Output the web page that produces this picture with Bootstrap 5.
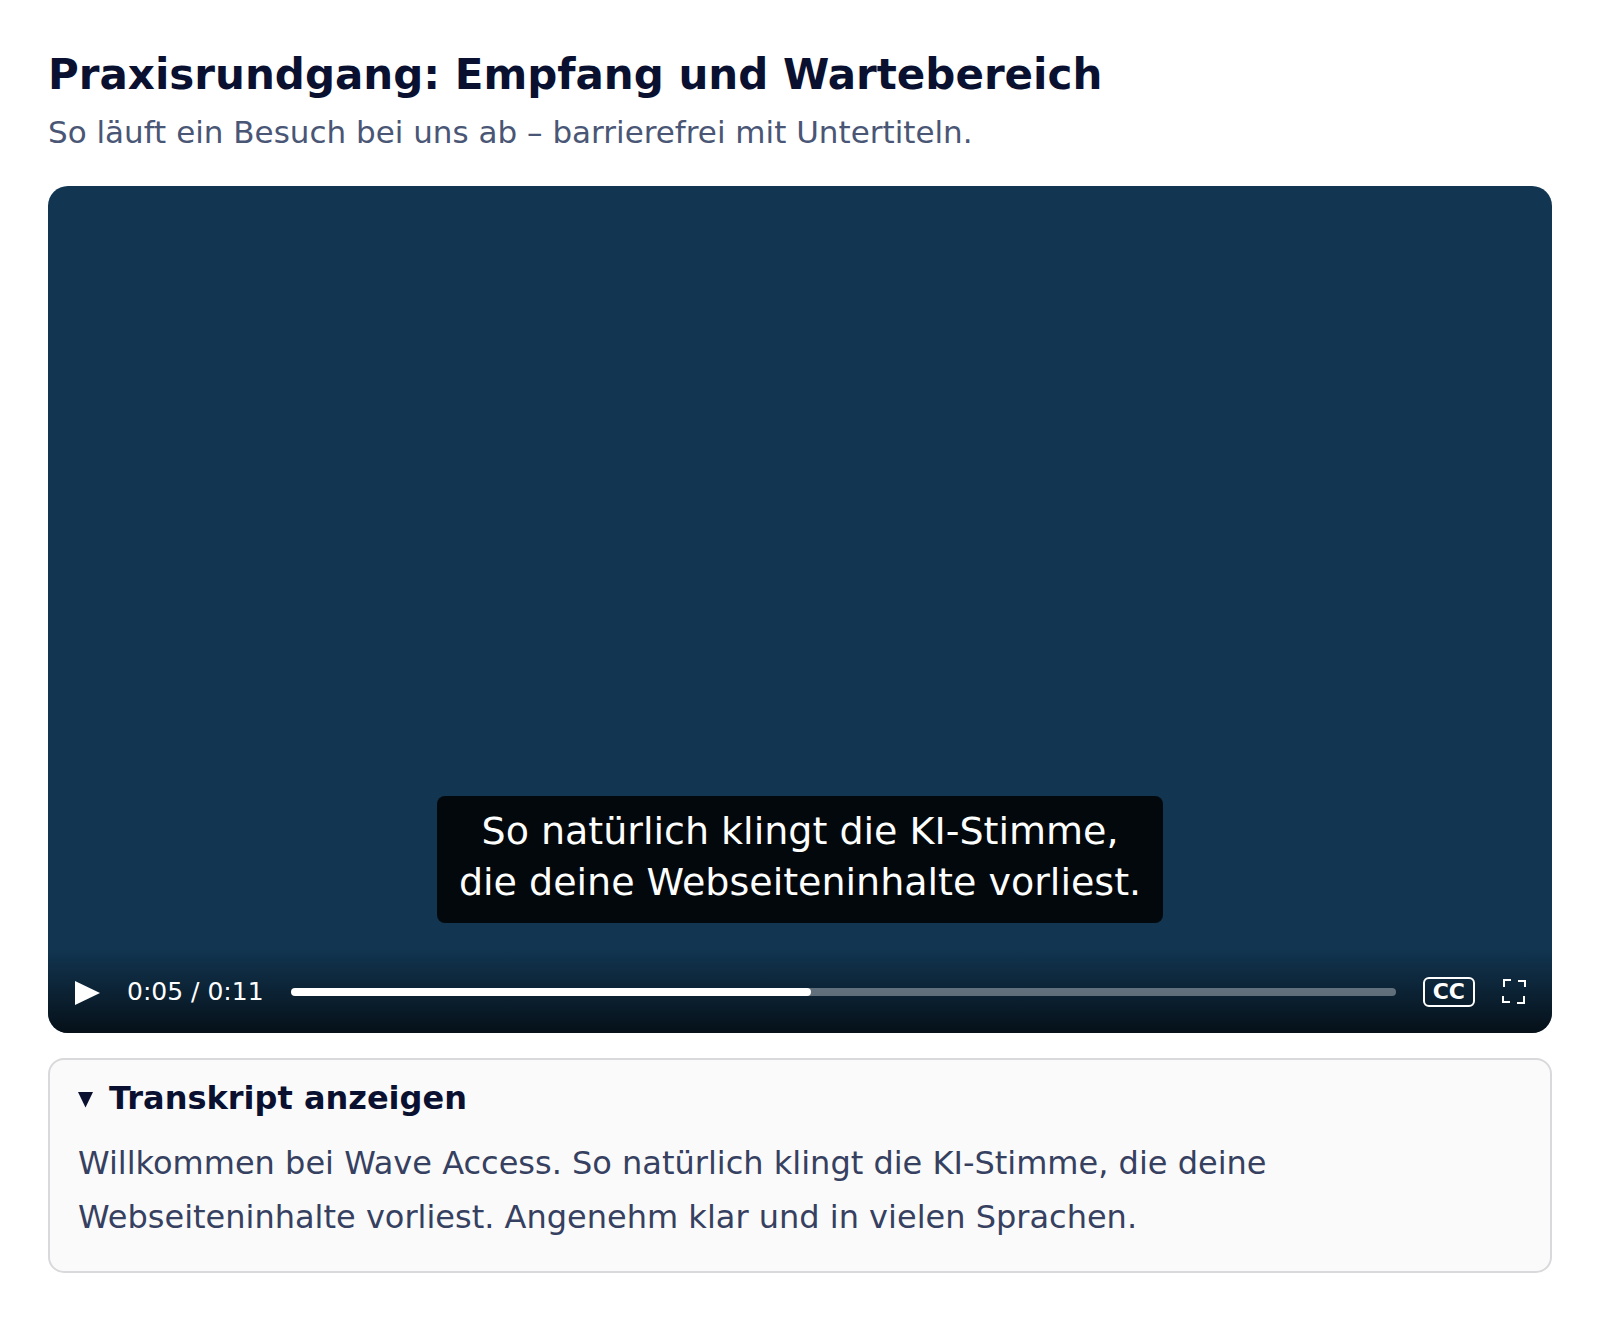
<!DOCTYPE html>
<html lang="de">
<head>
<meta charset="utf-8">
<meta name="viewport" content="width=device-width, initial-scale=1">
<title>Praxisrundgang</title>
<link rel="stylesheet" href="https://cdn.jsdelivr.net/npm/bootstrap@5.3.0/dist/css/bootstrap.min.css">
<style>
body { font-family: "DejaVu Sans", sans-serif; background: #fff; color: #0a1030; }
.page { padding: 48px; }
.tour-title { font-size: 42px; line-height: 53px; font-weight: 700; margin-bottom: 11px; }
.tour-sub { font-size: 31px; line-height: 40px; color: #4a5675; margin-bottom: 34px; }
.player { aspect-ratio: 71 / 40; background: #123652; border-radius: 20px; }
.caption-box { padding: 10px 22px 15px; margin-bottom: 24px; border-radius: 8px; background: rgba(0, 0, 0, .85); color: #fff; font-size: 38px; line-height: 51px; }
.controls { height: 86px; padding: 3px 26px 0; gap: 27px; background: linear-gradient(transparent, rgba(0, 0, 0, .7)); color: #fff; }
.ctl { background: none; border: 0; padding: 0; color: #fff; display: flex; }
.time { font-size: 25px; line-height: 30px; }
.cc { border: 2px solid #fff; border-radius: 6px; padding: 0 8px; font-size: 22px; line-height: 26px; font-weight: 700; }
.seek { appearance: none; height: 8px; min-width: 0; margin: 0; border-radius: 4px; background: linear-gradient(to right, #fff 46.7%, rgba(255, 255, 255, .35) 46.7%); }
.seek::-webkit-slider-thumb { appearance: none; width: 8px; height: 8px; border-radius: 4px; background: #fff; }
.transcript { margin-top: 25px; padding: 18px 28px 27px; border: 2px solid #d9d9dc; border-radius: 16px; background: #fafafa; }
.transcript summary { display: flex; align-items: center; gap: 16px; font-size: 32px; line-height: 40px; font-weight: 700; }
.transcript p { font-size: 32px; line-height: 54px; color: #364060; margin: 18px 0 0; }
</style>
</head>
<body>
<main class="container-fluid page">
  <h1 class="tour-title">Praxisrundgang: Empfang und Wartebereich</h1>
  <p class="tour-sub">So läuft ein Besuch bei uns ab – barrierefrei mit Untertiteln.</p>

  <section class="player d-flex flex-column justify-content-end overflow-hidden" aria-label="Videoplayer">
    <div class="caption-box align-self-center text-center">So natürlich klingt die KI-Stimme,<br>die deine Webseiteninhalte vorliest.</div>
    <div class="controls d-flex align-items-center">
      <button class="ctl" type="button" aria-label="Abspielen">
        <svg width="26" height="26" viewBox="0 0 26 26" fill="currentColor" aria-hidden="true"><path d="M1 2v24l25-12z"/></svg>
      </button>
      <span class="time text-nowrap">0:05 / 0:11</span>
      <input class="seek flex-grow-1" type="range" min="0" max="100" step="0.1" value="46.7" aria-label="Position">
      <button class="ctl cc" type="button" aria-label="Untertitel">CC</button>
      <button class="ctl" type="button" aria-label="Vollbild">
        <svg width="24" height="26" viewBox="0 0 24 26" fill="none" stroke="currentColor" stroke-width="2" aria-hidden="true"><path d="M2 8V1h7M16 2h7v6M1 17v6h7M15 24h7v-7"/></svg>
      </button>
    </div>
  </section>

  <details class="transcript" open>
    <summary><svg width="15" height="20" viewBox="0 0 15 20" fill="currentColor" aria-hidden="true"><path d="M0 4h15L7.500 19.500z"/></svg>Transkript anzeigen</summary>
    <p>Willkommen bei Wave Access. So natürlich klingt die KI-Stimme, die deine Webseiteninhalte vorliest. Angenehm klar und in vielen Sprachen.</p>
  </details>
</main>
<script src="https://cdn.jsdelivr.net/npm/bootstrap@5.3.0/dist/js/bootstrap.bundle.min.js"></script>
</body>
</html>
